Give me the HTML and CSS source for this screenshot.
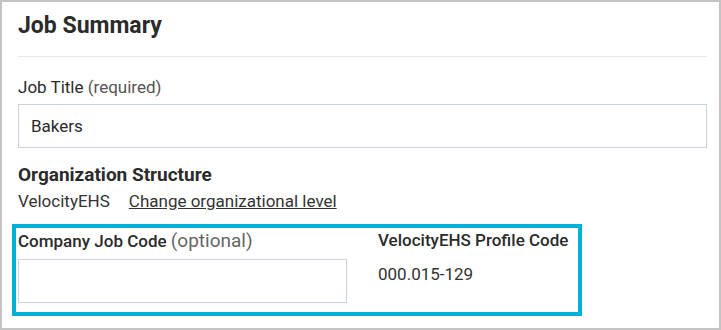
FILE: index.html
```html
<!DOCTYPE html>
<html lang="en-us">
  <head>
    <meta charset="utf-8" />
    <meta name="viewport" content="width=device-width, initial-scale=1.0" />
    <title>Job Summary</title>
    <link rel="stylesheet" href="styles.css">
  </head>
  <body>
    <section class="panel">
      <h2 class="panel-title">Job Summary</h2>

      <label class="field-label" for="job-title">Job Title <span class="hint">(required)</span></label>
      <input class="text-input" type="text" id="job-title" value="Bakers" />

      <h3 class="org-title">Organization Structure</h3>
      <div class="org-row">
        <span>VelocityEHS</span>
        <a href="#" class="org-link">Change organizational level</a>
      </div>

      <!-- highlighted area -->
      <div class="code-box">
        <div class="code-col">
          <label class="code-label" for="job-code">Company Job Code <span class="hint-big">(optional)</span></label>
          <input class="text-input code-input" type="text" id="job-code" />
        </div>
        <div class="profile-col">
          <div class="profile-label">VelocityEHS Profile Code</div>
          <div class="profile-value">000.015-129</div>
        </div>
      </div>
    </section>
  </body>
</html>
```

FILE: styles.css
```css
body {
  margin: 0;
  font-family: Roboto, "Liberation Sans", Arial, sans-serif;
  color: #2b2b2b;
}

.panel {
  box-sizing: border-box;
  width: 721px;
  height: 330px;
  border: 2px solid #c3c3c3;
  padding: 10px 12px 0 16px;
  background: #fff;
}

.panel-title {
  margin: 0;
  font-size: 23px;
  line-height: 27px;
  font-weight: 700;
  padding-bottom: 17px;
  border-bottom: 1px solid #e6e8eb;
}

.field-label {
  display: block;
  margin-top: 20px;
  font-size: 17px;
  line-height: 20px;
  color: #2b2b2b;
}

.hint {
  color: #555;
}

.text-input {
  display: block;
  box-sizing: border-box;
  width: 100%;
  height: 44px;
  margin-top: 7px;
  padding: 0 12px;
  border: 1px solid #c9d2da;
  border-radius: 0;
  font-family: inherit;
  font-size: 17px;
  color: #2b2b2b;
  outline: none;
}

.org-title {
  margin: 16px 0 0;
  font-size: 19px;
  line-height: 22px;
  font-weight: 700;
}

.org-row {
  display: flex;
  gap: 19px;
  margin-top: 5px;
  font-size: 17px;
  line-height: 20px;
  color: #333;
}

.org-link {
  color: #333;
  text-decoration: underline;
}

.code-box {
  display: flex;
  gap: 31px;
  width: 570px;
  box-sizing: border-box;
  margin: 13px 0 0 -6px;
  padding: 3px 0 9px 2px;
  border: 4px solid #00b2d9;
}

.code-col {
  width: 329px;
}

.code-label {
  display: block;
  font-size: 17px;
  line-height: 20px;
  font-weight: 500;
  color: #2b2b2b;
}

.hint-big {
  font-size: 19px;
  font-weight: 400;
  color: #666;
}

.code-input {
  margin-top: 8px;
}

.profile-col {
  margin-top: -1px;
}

.profile-label {
  font-size: 17px;
  line-height: 20px;
  font-weight: 500;
}

.profile-value {
  margin-top: 14px;
  font-size: 17px;
  line-height: 20px;
  color: #333;
}
```
